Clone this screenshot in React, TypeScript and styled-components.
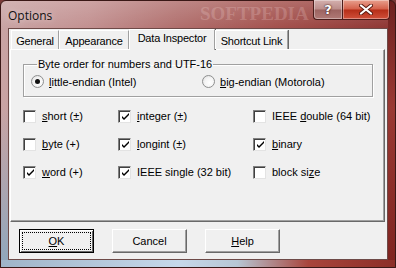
import styled, { createGlobalStyle } from "styled-components"

const GlobalStyle = createGlobalStyle`
  html, body {
    margin: 0;
    padding: 0;
    width: 396px;
    height: 268px;
    overflow: hidden;
    background: #7a3a38;
  }
  * { box-sizing: border-box; }
`

const tabs = [
  { label: "General", width: 48 },
  { label: "Appearance", width: 70 },
  { label: "Data Inspector", width: 86, active: true },
  { label: "Shortcut Link", width: 73 },
]

// each entry: text before the mnemonic, mnemonic letter, text after
const options = [
  { pre: "", key: "s", post: "hort (±)", checked: false },
  { pre: "", key: "i", post: "nteger (±)", checked: true },
  { pre: "IEEE ", key: "d", post: "ouble (64 bit)", checked: false },
  { pre: "", key: "b", post: "yte (+)", checked: false },
  { pre: "", key: "l", post: "ongint (±)", checked: true },
  { pre: "", key: "b", post: "inary", checked: true },
  { pre: "", key: "w", post: "ord (+)", checked: true },
  { pre: "IEEE single (32 bit)", key: "", post: "", checked: true },
  { pre: "block si", key: "z", post: "e", checked: false },
]

const CheckMark = () => (
  <svg width="9" height="9" viewBox="0 0 9 9">
    <path d="M1 4 L3 6 L8 1 L8 3 L3 8 L1 6 Z" fill="#000" />
  </svg>
)

const CloseGlyph = () => (
  <svg width="14" height="11" viewBox="0 0 14 11">
    <path d="M2 1.5 L12 9.5 M12 1.5 L2 9.5" stroke="#5a1a10" strokeWidth="4" strokeLinecap="round" />
    <path d="M2 1.5 L12 9.5 M12 1.5 L2 9.5" stroke="#fff" strokeWidth="2.2" strokeLinecap="round" />
  </svg>
)

const App = () => {
  return (
    <>
      <GlobalStyle />
      <Window>
        <TitleBar>
          <Title>Options</Title>
          <Watermark>SOFTPEDIA</Watermark>
          <Caption>
            <HelpButton>?</HelpButton>
            <CloseButton><CloseGlyph /></CloseButton>
          </Caption>
        </TitleBar>
        <Client>
          <TabRow>
            {tabs.map(t => (
              <Tab key={t.label} $active={!!t.active} $width={t.width}>{t.label}</Tab>
            ))}
          </TabRow>
          <Panel>
            <GroupBox>
              <Legend>Byte order for numbers and UTF-16</Legend>
              <RadioRow>
                <Choice>
                  <Radio $checked />
                  <span><Key>l</Key>ittle-endian (Intel)</span>
                </Choice>
                <Choice>
                  <Radio />
                  <span><Key>b</Key>ig-endian (Motorola)</span>
                </Choice>
              </RadioRow>
            </GroupBox>
            <CheckGrid>
              {options.map((o, i) => (
                <Choice key={i}>
                  <Box>{o.checked && <CheckMark />}</Box>
                  <span>{o.pre}{o.key && <Key>{o.key}</Key>}{o.post}</span>
                </Choice>
              ))}
            </CheckGrid>
          </Panel>
          <ButtonRow>
            <PushButton $default><Focus><Key>O</Key>K</Focus></PushButton>
            <PushButton>Cancel</PushButton>
            <PushButton><Key>H</Key>elp</PushButton>
          </ButtonRow>
        </Client>
      </Window>
    </>
  )
}

export default App

const Window = styled.div`
  position: relative;
  width: 396px;
  height: 268px;
  display: flex;
  flex-direction: column;
  padding: 0 7px 7px 7px;
  font-family: "Liberation Sans", Arial, sans-serif;
  font-size: 11px;
  color: #000;
  background:
    linear-gradient(90deg, #9fb4c8 0%, #c6d8ea 45%, #b7c6d4 60%, #a8453c 78%, #8c2e28 100%) bottom / 100% 7px no-repeat,
    linear-gradient(180deg, rgba(0,0,0,0) 40%, #8fa7bd 100%) left / 7px 100% no-repeat,
    linear-gradient(180deg, #6e2220 0%, #9a3a34 40%, #7e2420 100%) right / 7px 100% no-repeat,
    linear-gradient(180deg, rgba(255,255,255,0.18) 0%, rgba(255,255,255,0) 28px),
    linear-gradient(90deg, #c9a4a4 0%, #c29090 22%, #b06e6c 45%, #a3504c 70%, #8e3431 100%);
  border: 1px solid #3a1816;
  border-radius: 6px 6px 0 0;
`

const TitleBar = styled.div`
  position: relative;
  height: 28px;
  display: flex;
  align-items: flex-start;
  margin: -1px -1px 0 0;
`

const Title = styled.div`
  margin-top: 7px;
  font-family: "Open Sans", "Liberation Sans", sans-serif;
  font-size: 12px;
  color: #111;
  text-shadow: 0 0 6px rgba(255,255,255,0.6);
`

const Watermark = styled.div`
  position: absolute;
  left: 192px;
  top: 3px;
  font-family: "Liberation Serif", serif;
  font-weight: bold;
  font-size: 19px;
  line-height: 22px;
  color: rgba(255, 235, 235, 0.2);
  pointer-events: none;
`

const Caption = styled.div`
  margin-left: auto;
  display: flex;
  margin-right: -1px;
  position: relative;
`

const CaptionButton = styled.div`
  height: 20px;
  display: flex;
  align-items: center;
  justify-content: center;
  border: 1px solid #4a1c1a;
  border-top: none;
  box-shadow: inset 0 0 0 1px rgba(255,255,255,0.35);
`

const HelpButton = styled(CaptionButton)`
  width: 29px;
  border-right: none;
  border-radius: 0 0 0 4px;
  background: linear-gradient(180deg, #d4b0ae 0%, #bb8d8a 48%, #9c6360 52%, #b07a76 100%);
  color: #fff;
  font-family: "DejaVu Sans", sans-serif;
  font-weight: bold;
  font-size: 13px;
  text-shadow: 0 0 2px #3a1010, 0 0 1px #3a1010;
`

const CloseButton = styled(CaptionButton)`
  width: 48px;
  border-radius: 0 0 4px 0;
  background: linear-gradient(180deg, #e8a08e 0%, #d4604a 48%, #b52e18 52%, #d0503a 100%);
`

const Client = styled.div`
  flex: 1;
  display: flex;
  flex-direction: column;
  background: #f0f0f0;
  border: 1px solid #6e4a48;
`

const TabRow = styled.div`
  height: 20px;
  display: flex;
  align-items: flex-end;
  padding-left: 2px;
  position: relative;
  z-index: 1;
`

const Tab = styled.div<{ $active: boolean; $width: number }>`
  width: ${p => p.$width}px;
  height: ${p => (p.$active ? 21 : 19)}px;
  margin-bottom: ${p => (p.$active ? -1 : 0)}px;
  display: flex;
  justify-content: center;
  align-items: flex-start;
  padding-top: ${p => (p.$active ? 2 : 4)}px;
  background: #f0f0f0;
  border-top: 1px solid #fff;
  border-left: 1px solid #fff;
  border-right: 1px solid #a0a0a0;
  box-shadow: 1px 0 0 #696969;
  white-space: nowrap;
  letter-spacing: -0.2px;
`

const Panel = styled.div`
  position: relative;
  height: 173px;
  margin: 0 2px 0 1px;
  padding: 8px 13px 0 12px;
  border: 1px solid;
  border-color: #fff #696969 #696969 #fff;
  box-shadow: inset -1px -1px 0 #a0a0a0;
`

const GroupBox = styled.fieldset`
  position: relative;
  margin: 0;
  width: 350px;
  padding: 4px 0 8px 7px;
  border: 1px solid #a0a0a0;
  box-shadow: inset 1px 1px 0 #fff, 1px 1px 0 #fff;
`

const Legend = styled.legend`
  margin-left: 6px;
  padding: 0 1px;
  line-height: 13px;
`

const RadioRow = styled.div`
  display: grid;
  grid-template-columns: 171px 1fr;
`

const Choice = styled.label`
  display: flex;
  align-items: center;
  gap: 5px;
  white-space: nowrap;
`

const Radio = styled.span<{ $checked?: boolean }>`
  width: 13px;
  height: 13px;
  border-radius: 50%;
  border: 1px solid #8e8f8f;
  background: radial-gradient(circle at 60% 60%, #fff 0%, #f4f4f4 50%, #d8d8d8 100%);
  display: flex;
  align-items: center;
  justify-content: center;
  &::after {
    content: "";
    width: 5px;
    height: 5px;
    border-radius: 50%;
    background: ${p => (p.$checked ? "#111" : "transparent")};
  }
`

const CheckGrid = styled.div`
  display: grid;
  grid-template-columns: 95px 135px 1fr;
  grid-auto-rows: 28px;
  align-items: center;
  margin-top: 5px;
  position: relative;
`

const Box = styled.span`
  width: 13px;
  height: 13px;
  flex: none;
  margin-right: 1px;
  background: #fff;
  border: 1px solid;
  border-color: #808080 #e3e3e3 #e3e3e3 #808080;
  box-shadow: inset 1px 1px 0 #404040;
  display: flex;
  align-items: center;
  justify-content: center;
  padding: 1px 0 0 1px;
`

const Key = styled.u`
  text-decoration: underline;
  text-underline-offset: 1px;
`

const ButtonRow = styled.div`
  display: flex;
  gap: 18px;
  padding: 7px 0 0 10px;
`

const PushButton = styled.div<{ $default?: boolean }>`
  width: 75px;
  height: 24px;
  display: flex;
  align-items: center;
  justify-content: center;
  background: #f0f0f0;
  border: 1px solid;
  border-color: ${p => (p.$default ? "#000" : "#fff #696969 #696969 #fff")};
  box-shadow: ${p =>
    p.$default
      ? "inset 1px 1px 0 #fff, inset -1px -1px 0 #696969"
      : "inset -1px -1px 0 #a0a0a0"};
  padding: ${p => (p.$default ? "2px" : "0")};
`

const Focus = styled.span`
  width: 100%;
  height: 100%;
  display: flex;
  align-items: center;
  justify-content: center;
  outline: 1px dotted #000;
  outline-offset: -1px;
`
